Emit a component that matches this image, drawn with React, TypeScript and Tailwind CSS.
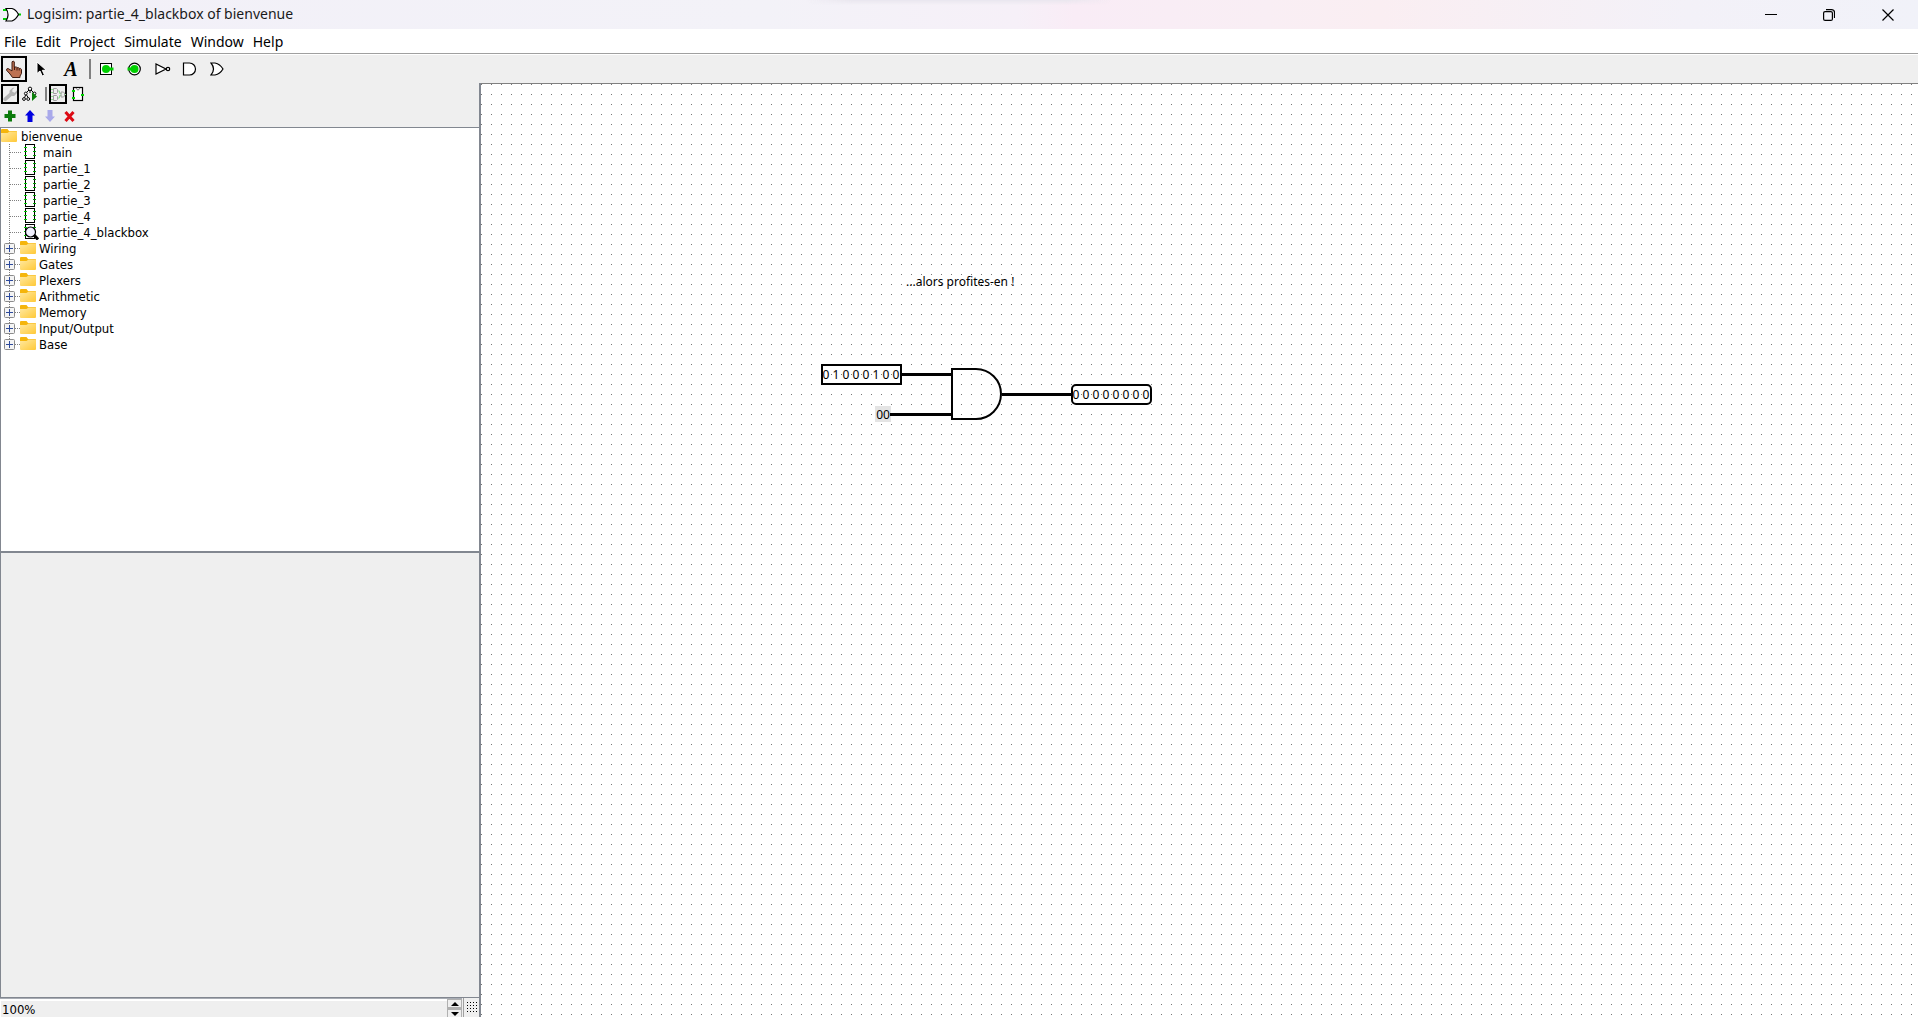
import React from "react";

const circuits = ["main", "partie_1", "partie_2", "partie_3", "partie_4"];
const libraries = ["Wiring", "Gates", "Plexers", "Arithmetic", "Memory", "Input/Output", "Base"];
const menus = ["File", "Edit", "Project", "Simulate", "Window", "Help"];

const INPUT_BITS = "01000100";
const OUTPUT_BITS = "00000000";

function AppIcon() {
  return (
    <svg width="19" height="16" viewBox="0 0 19 16" fill="none">
      <path d="M1 3h4M1 12h4" stroke="#00d000" strokeWidth="2" />
      <path d="M15 7.5h4" stroke="#00d000" strokeWidth="2" />
      <path d="M4 1.5h6q4 1 6.500 6q-2.500 5-6.500 6.500h-6q4-6.500 0-12.500z" fill="#fff" stroke="#000" strokeWidth="1.200" />
    </svg>
  );
}

function HandIcon() {
  return (
    <svg width="16" height="18" viewBox="0 0 16 18">
      <path
        d="M6 1.800q1.200-1.300 2.300 0v5.200h2l.7.700h1.600l.7.700h1.200l1 1v4l-1.500 2.600v1.500h-7.500l-2.500-3.500-3.500-3.800q0-2 1.700-1.600l3.800 2.300z"
        fill="#bd7152"
        stroke="#3c1a10"
        strokeWidth="1"
      />
      <path d="M8.500 7v3M11 8v2.500M13.200 8.500v2" stroke="#3c1a10" strokeWidth="1" />
    </svg>
  );
}

function ArrowIcon() {
  return (
    <svg width="12" height="16" viewBox="0 0 12 16">
      <path d="M1 1v11.500l3-2.500 2.200 5 2.300-1-2.200-4.700h4z" fill="#000" stroke="#fff" strokeWidth="1" />
    </svg>
  );
}

function PinIcon({ round }: { round?: boolean }) {
  return (
    <svg width="18" height="14" viewBox="0 0 18 14">
      {round ? (
        <circle cx="8.500" cy="7" r="5.800" fill="#fff" stroke="#000" strokeWidth="1.200" />
      ) : (
        <rect x="2.500" y="1.500" width="11" height="11" fill="#fff" stroke="#000" />
      )}
      <circle cx={round ? 8.5 : 8} cy="7" r="4" fill="#00d000" />
      {round ? <path d="M1.500 7h5" stroke="#00d000" strokeWidth="3" /> : <path d="M10 7h5.500" stroke="#00d000" strokeWidth="3" />}
    </svg>
  );
}

function NotIcon() {
  return (
    <svg width="18" height="14" viewBox="0 0 18 14" fill="#fff" stroke="#000" strokeWidth="1.200">
      <path d="M2 2v10l10-5z" />
      <circle cx="14" cy="7" r="1.700" />
    </svg>
  );
}

function AndIcon() {
  return (
    <svg width="18" height="14" viewBox="0 0 18 14" fill="#fff" stroke="#000" strokeWidth="1.200">
      <path d="M1.500 1h6a6 6 0 0 1 0 12h-6z" />
    </svg>
  );
}

function OrIcon() {
  return (
    <svg width="18" height="14" viewBox="0 0 18 14" fill="#fff" stroke="#000" strokeWidth="1.200">
      <path d="M1 1h4q5 1 8 6q-3 5-8 6h-4q5-6 0-12z" />
    </svg>
  );
}

function WrenchIcon() {
  return (
    <svg width="15" height="15" viewBox="0 0 15 15">
      <path d="M2.500 12.500l6-5.500" stroke="#b4b4b4" strokeWidth="4" strokeLinecap="round" />
      <path d="M10 0.500l-3 3v4l2 1.500h3l3-3v-3l-2.500 2.500-2.500-1v-2l2.500-2.500z" fill="#b4b4b4" />
    </svg>
  );
}

function SimTreeIcon() {
  return (
    <svg width="16" height="16" viewBox="0 0 16 16" fill="none" stroke="#000">
      <path d="M7 4l-3 3M9 4l3 3M3.500 9l-1 3M4.500 9l2 3M8 4v3" />
      <circle cx="8" cy="2.800" r="1.700" fill="#fff" />
      <circle cx="3.800" cy="7.500" r="1.400" fill="#fff" />
      <circle cx="2" cy="13" r="1.400" fill="#fff" />
      <circle cx="6.200" cy="13" r="1.400" fill="#fff" />
      <circle cx="12.500" cy="7.500" r="1.400" fill="#fff" />
      <path d="M10 6v9l5-4.500z" fill="#0a800a" stroke="none" />
    </svg>
  );
}

function LayoutIcon() {
  return (
    <svg width="15" height="15" viewBox="0 0 15 15" className="shrink-0" fill="none">
      <path d="M0 2.500h2M0 5.500h2M0 9.500h2M0 12.500h2M6 4h2.500v2.500h2M6 11h2.500v-2.500h2M13.500 7.500h1.500" stroke="#8fe08f" />
      <path d="M2.500 1.500h3l1 1v3l-1 1h-3zM2.500 8.500h3l1 1v3l-1 1h-3zM10 5h2.500l1 1v3l-1 1h-2.500z" stroke="#a0a0a0" />
    </svg>
  );
}

function ChipIcon() {
  return (
    <svg width="14" height="16" viewBox="0 0 14 16">
      <rect x="2.500" y="1.500" width="9" height="13" fill="#fff" stroke="#000" strokeWidth="1.200" />
      <path d="M5 2q2 4 4 0" fill="none" stroke="#808080" />
      <path d="M1 5h3M1 12h3M10 9h3" stroke="#00d000" strokeWidth="2" />
    </svg>
  );
}

function CircuitIcon({ viewed }: { viewed?: boolean }) {
  return (
    <svg width="16" height="16" viewBox="0 0 16 16" className="shrink-0">
      <rect x="2.500" y="0.500" width="9" height="14" fill="#fff" stroke="#000" />
      <path d="M1 3.500h3M1 7.500h3M1 11.500h3" stroke="#00d000" />
      <path d="M10 3.500h3M10 7.500h3M10 11.500h3" stroke="#00a000" />
      {viewed && (
        <g>
          <path d="M11 11l4 4.500" stroke="#000" strokeWidth="3" />
          <circle cx="7.500" cy="8" r="5" fill="#f0f0ff" stroke="#000" strokeWidth="1.200" />
        </g>
      )}
    </svg>
  );
}

function FolderIcon() {
  return (
    <svg width="16" height="16" viewBox="0 0 16 16" className="shrink-0">
      <defs>
        <linearGradient id="folder" x1="0" y1="0" x2="1" y2="1">
          <stop offset="0" stopColor="#ffe9a2" />
          <stop offset="1" stopColor="#ffc937" />
        </linearGradient>
      </defs>
      <path d="M0 2q0-1 1-1h5.500l1.500 2h7q1 0 1 1v3h-16z" fill="#f5b50b" />
      <path d="M0 5h6.500l2-1.500h6.500q1 0 1 1v8.500q0 1-1 1h-14q-1 0-1-1z" fill="url(#folder)" />
    </svg>
  );
}

function ToolButton({ label, active, children }: { label: string; active?: boolean; children: React.ReactNode }) {
  return (
    <button
      aria-label={label}
      className={
        active
          ? "flex h-[26px] w-[26px] items-center justify-center border-2 border-black"
          : "flex h-[26px] w-7 items-center justify-center"
      }
    >
      {children}
    </button>
  );
}

function SmallButton({ label, active, children }: { label: string; active?: boolean; children: React.ReactNode }) {
  return (
    <button
      aria-label={label}
      className={
        active
          ? "flex h-5 w-[18px] items-center justify-center border-2 border-black"
          : "flex h-5 w-5 items-center justify-center"
      }
    >
      {children}
    </button>
  );
}

function TitleBar() {
  return (
    <header className="relative flex h-[29px] shrink-0 items-center bg-[linear-gradient(90deg,#f2f0f8_0%,#f3f2f8_40%,#f6f0f8_53%,#f9ecf6_56%,#f9eef4_66%,#faeef2_72%,#f3f1f8_88%,#f1f2f9_100%)] pr-px pl-[2px]">
      <div className="absolute top-0 left-[42%] h-[5px] w-[16%] bg-[linear-gradient(90deg,transparent,#e9e6ee_15%,#e9e6ee_85%,transparent)] [mask-image:linear-gradient(#000,transparent)]" />
      <AppIcon />
      <h1 className="ml-[6px] flex-1 pb-[2px] text-[14px] leading-5 text-[#1a1a1a]">
        Logisim: partie_4_blackbox of bienvenue
      </h1>
      <div className="flex h-full">
        <button aria-label="Minimize" className="flex w-[58px] items-center justify-center">
          <svg width="12" height="12" viewBox="0 0 12 12" stroke="#000"><path d="M0 5.500h12" /></svg>
        </button>
        <button aria-label="Restore" className="flex w-[58px] items-center justify-center">
          <svg width="12" height="12" viewBox="0 0 12 12" fill="none" stroke="#000" strokeWidth="1.200">
            <rect x="0.600" y="2.600" width="8.800" height="8.800" rx="1.500" />
            <path d="M3 .6h5.500q3 0 3 3v5.400" />
          </svg>
        </button>
        <button aria-label="Close" className="flex w-[59px] items-center justify-center">
          <svg width="12" height="12" viewBox="0 0 12 12" stroke="#000" strokeWidth="1.200"><path d="M.5.5l11 11M11.500.5l-11 11" /></svg>
        </button>
      </div>
    </header>
  );
}

function Toolbar() {
  return (
    <div className="flex h-7 shrink-0 items-center bg-[#efefef] pl-px">
      <ToolButton label="Poke" active><HandIcon /></ToolButton>
      <div className="ml-px flex">
        <ToolButton label="Select"><ArrowIcon /></ToolButton>
        <ToolButton label="Text">
          <span className="pl-[2px] font-['Liberation_Serif',serif] text-[20px] leading-5 font-bold italic">A</span>
        </ToolButton>
      </div>
      <div className="mr-[2px] ml-[5px] h-5 w-[2px] bg-[#808080]" />
      <div className="flex">
        <ToolButton label="Input pin"><PinIcon /></ToolButton>
        <ToolButton label="Output pin"><PinIcon round /></ToolButton>
        <ToolButton label="NOT gate"><NotIcon /></ToolButton>
        <ToolButton label="AND gate"><AndIcon /></ToolButton>
        <ToolButton label="OR gate"><OrIcon /></ToolButton>
      </div>
    </div>
  );
}

function ExplorerTools() {
  return (
    <div className="shrink-0 bg-[#efefef]">
      <div className="flex h-[22px] items-center pl-px">
        <SmallButton label="Show toolbox" active><WrenchIcon /></SmallButton>
        <div className="ml-px">
          <SmallButton label="Show simulation tree"><SimTreeIcon /></SmallButton>
        </div>
        <div className="mr-[2px] ml-[5px] h-[14px] w-[2px] bg-[#808080]" />
        <SmallButton label="Edit layout" active><LayoutIcon /></SmallButton>
        <div className="ml-px">
          <SmallButton label="Edit appearance"><ChipIcon /></SmallButton>
        </div>
      </div>
      <div className="flex h-[22px] items-center">
        <SmallButton label="Add circuit">
          <svg width="12" height="12" viewBox="0 0 12 12"><path d="M4 .5h4v3.500h3.500v4h-3.500v3.500h-4v-3.500h-3.500v-4h3.500z" fill="#0a7a0a" /></svg>
        </SmallButton>
        <SmallButton label="Move up">
          <svg width="10" height="12" viewBox="0 0 10 12"><path d="M5 0l5 5.500h-2.500v6.500h-5v-6.500h-2.500z" fill="#0000e0" /></svg>
        </SmallButton>
        <SmallButton label="Move down">
          <svg width="10" height="12" viewBox="0 0 10 12"><path d="M5 12l5-5.500h-2.500v-6.500h-5v6.500h-2.500z" fill="#a8a8ea" /></svg>
        </SmallButton>
        <SmallButton label="Remove circuit">
          <svg width="13" height="11" viewBox="0 0 13 11"><path d="M1.500 1l8 9M9.500 1l-8 9" stroke="#dc0a14" strokeWidth="3" /></svg>
        </SmallButton>
      </div>
    </div>
  );
}

function Branch() {
  return (
    <svg width="22" height="16" viewBox="0 0 22 16" className="shrink-0">
      <path d="M8.500 0v16" stroke="#808080" strokeDasharray="1 1" />
      <path d="M9 8.500h11" stroke="#808080" strokeDasharray="1 1" />
    </svg>
  );
}

function Expander({ last }: { last?: boolean }) {
  return (
    <svg width="19" height="16" viewBox="0 0 19 16" className="shrink-0">
      <path d={last ? "M8.500 0v4" : "M8.500 0v16"} stroke="#808080" strokeDasharray="1 1" />
      <path d="M14 8.500h5" stroke="#808080" strokeDasharray="1 1" />
      <rect x="3.500" y="3.500" width="10" height="10" rx="1" fill="#f4f4f4" stroke="#8c8c8c" />
      <path d="M5 8.500h7M8.500 5v7" stroke="#2c4a9c" />
    </svg>
  );
}

function Explorer() {
  return (
    <ul className="h-[424px] shrink-0 overflow-hidden border-t border-l border-[#828790] bg-white font-['DejaVu_Sans_Condensed','DejaVu_Sans',sans-serif] text-[13px] leading-4 text-black">
      <li className="flex h-4 items-center">
        <FolderIcon />
        <span className="ml-1 pt-[2px]">bienvenue</span>
      </li>
      {circuits.map((name) => (
        <li key={name} className="flex h-4 items-center">
          <Branch />
          <CircuitIcon />
          <span className="ml-[4px] pt-[2px]">{name}</span>
        </li>
      ))}
      <li className="flex h-4 items-center">
        <Branch />
        <CircuitIcon viewed />
        <span className="ml-[4px] pt-[2px]">partie_4_blackbox</span>
      </li>
      {libraries.map((name, i) => (
        <li key={name} className="flex h-4 items-center">
          <Expander last={i === libraries.length - 1} />
          <FolderIcon />
          <span className="ml-[3px] pt-[2px]">{name}</span>
        </li>
      ))}
    </ul>
  );
}

function StatusBar() {
  return (
    <div className="flex h-[20px] shrink-0 border-t border-[#828790] bg-[#efefef]">
      <div className="flex min-w-0 flex-1 border-t border-[#a8acb4]">
        <input
          aria-label="Zoom"
          defaultValue="100%"
          className="h-full min-w-0 flex-1 border-t-2 border-l border-white pt-px pl-px font-['DejaVu_Sans_Condensed','DejaVu_Sans',sans-serif] text-[13px] leading-4 outline-none"
        />
        <div className="flex w-[15px] flex-col">
          <button aria-label="Zoom in" className="flex h-[9px] shrink-0 items-center justify-center border border-[#b0b0b0]">
            <svg width="8" height="4" viewBox="0 0 8 4" className="shrink-0"><path d="M0 4l4-4 4 4z" /></svg>
          </button>
          <button aria-label="Zoom out" className="flex h-[9px] shrink-0 items-center justify-center border border-t-2 border-b-0 border-[#b0b0b0]">
            <svg width="8" height="4" viewBox="0 0 8 4" className="shrink-0"><path d="M0 0l4 4 4-4z" /></svg>
          </button>
        </div>
      </div>
      <button aria-label="Show grid" className="ml-px flex w-4 items-center justify-center border-l border-[#a0a0a0]">
        <svg width="10" height="11" viewBox="0 0 10 11">
          {[0, 1, 2, 3].map((r) => (
            <path key={r} d={`M0 ${r * 3 + 0.5}h10`} stroke="#000" strokeDasharray="1 2" />
          ))}
        </svg>
      </button>
    </div>
  );
}

function Bits({ bits, x, y }: { bits: string; x: number; y: number }) {
  return (
    <text x={bits.split("").map((_, i) => x + i * 10).join(" ")} y={y} textAnchor="middle">
      {bits}
    </text>
  );
}

function Canvas() {
  return (
    <main className="min-w-0 flex-1 overflow-hidden border-t border-[#808080] bg-white">
      <svg className="block h-full w-full font-['Noto_Sans',sans-serif] text-[12px]" fill="#000">
        <defs>
          <pattern id="grid" width="10" height="10" patternUnits="userSpaceOnUse">
            <rect width="1" height="1" fill="#777" />
          </pattern>
        </defs>
        <rect width="100%" height="100%" fill="url(#grid)" />
        <text x="425" y="202">...alors profites-en !</text>
        <g stroke="#000" strokeWidth="3">
          <path d="M421 290.500h50M409 330.500h62M521 310.500h70" />
        </g>
        <g fill="none" stroke="#000" strokeWidth="2">
          <rect x="341" y="281" width="79" height="19" />
          <rect x="591" y="301" width="79" height="19" rx="4" />
          <path d="M495 285h-24v50h24a25 25 0 0 0 0-50z" />
        </g>
        <rect x="394" y="322" width="16" height="16" fill="#e4e4e4" />
        <path d="M409 330.500h2" stroke="#000" strokeWidth="3" />
        <Bits bits={INPUT_BITS} x={345} y={295} />
        <Bits bits={OUTPUT_BITS} x={595} y={315} />
        <text x="402" y="335" textAnchor="middle">00</text>
      </svg>
    </main>
  );
}

export default function App() {
  return (
    <div className="flex h-screen flex-col overflow-hidden bg-[#efefef] font-['Noto_Sans',sans-serif]">
      <TitleBar />
      <nav className="flex h-[26px] shrink-0 items-center gap-[9px] border-b border-white bg-white pl-1 text-[14px] leading-5 text-black shadow-[inset_0_-1px_0_#a0a0a0]">
        {menus.map((m) => (
          <button key={m}>{m}</button>
        ))}
      </nav>
      <Toolbar />
      <div className="flex min-h-0 flex-1">
        <aside className="flex w-[481px] shrink-0 flex-col border-r-2 border-[#828790]">
          <ExplorerTools />
          <Explorer />
          <div className="min-h-0 flex-1 border-t-2 border-l border-[#828790] bg-[#efefef]" />
          <StatusBar />
        </aside>
        <Canvas />
      </div>
    </div>
  );
}
